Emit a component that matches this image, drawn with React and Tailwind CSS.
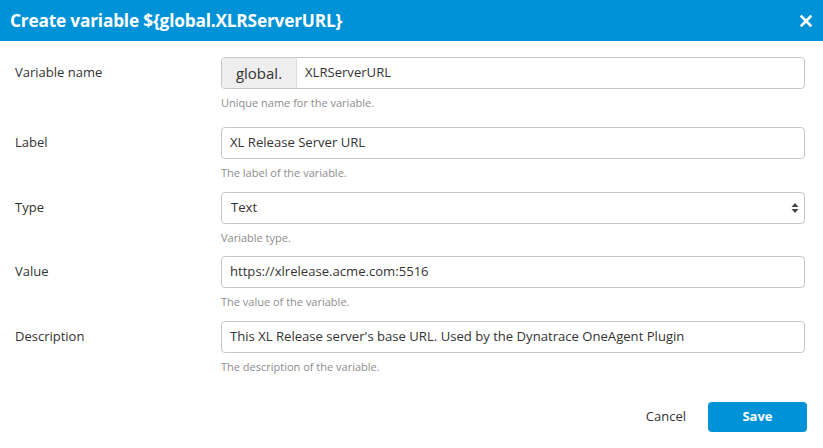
import React from "react";

function Row({ label, help, children, mb }) {
  return (
    <div className={`flex ${mb}`}>
      <div className="w-[206px] h-[32px] flex items-center text-[13px] text-[#333]">{label}</div>
      <div className="flex-1">
        {children}
        <div className="mt-[7px] h-[14px] leading-[14px] text-[11px] text-[#8c8c8c]">{help}</div>
      </div>
    </div>
  );
}

function TextBox({ value }) {
  return (
    <div className="h-[32px] border border-[#c8c8c8] rounded-[4px] flex items-center px-[8px] text-[13.1px] text-[#333] bg-white">
      {value}
    </div>
  );
}

export default function App() {
  return (
    <div className="w-[823px] h-[448px] bg-white overflow-hidden" style={{ fontFamily: '"Open Sans", sans-serif' }}>
      <div className="h-[41px] bg-[#0092d7] flex items-center justify-between pl-[10px] pr-[11px]">
        <div className="text-white font-bold text-[17.3px] tracking-[-0.2px]">Create variable ${"{"}global.XLRServerURL{"}"}</div>
        <svg width="12" height="12" viewBox="0 0 12 12">
          <path d="M1.5 1.5 L10.5 10.5 M10.5 1.5 L1.5 10.5" stroke="white" strokeWidth="2.6" strokeLinecap="square" />
        </svg>
      </div>
      <div className="pl-[15px] pr-[18px] pt-[16px]">
        <Row label="Variable name" help="Unique name for the variable." mb="mb-[17px]">
          <div className="h-[32px] border border-[#c8c8c8] rounded-[4px] flex overflow-hidden">
            <div className="w-[75px] bg-[#eeeeee] border-r border-[#dcdcdc] flex items-center justify-center text-[15px] text-[#333]">global.</div>
            <div className="flex-1 flex items-center px-[8px] text-[13.1px] text-[#333]">XLRServerURL</div>
          </div>
        </Row>
        <Row label="Label" help="The label of the variable." mb="mb-[12px]">
          <TextBox value="XL Release Server URL" />
        </Row>
        <Row label="Type" help="Variable type." mb="mb-[11px]">
          <div className="h-[32px] border border-[#c8c8c8] rounded-[4px] flex items-center justify-between pl-[9px] pr-[5px] text-[13.1px] text-[#333]">
            <span>Text</span>
            <svg width="8" height="12" viewBox="0 0 8 12">
              <path d="M4 1 L7.5 5 L0.5 5 Z" fill="#444" />
              <path d="M4 11 L7.5 7 L0.5 7 Z" fill="#444" />
            </svg>
          </div>
        </Row>
        <Row label="Value" help="The value of the variable." mb="mb-[12px]">
          <TextBox value="https://xlrelease.acme.com:5516" />
        </Row>
        <Row label="Description" help="The description of the variable." mb="mb-[28px]">
          <TextBox value="This XL Release server's base URL. Used by the Dynatrace OneAgent Plugin" />
        </Row>
        <div className="flex justify-end items-center">
          <div className="text-[13px] text-[#333] mr-[22px]">Cancel</div>
          <div className="w-[99px] h-[30px] bg-[#0092d7] rounded-[4px] flex items-center justify-center text-white font-bold text-[13px] mr-[-2px]">Save</div>
        </div>
      </div>
    </div>
  );
}
